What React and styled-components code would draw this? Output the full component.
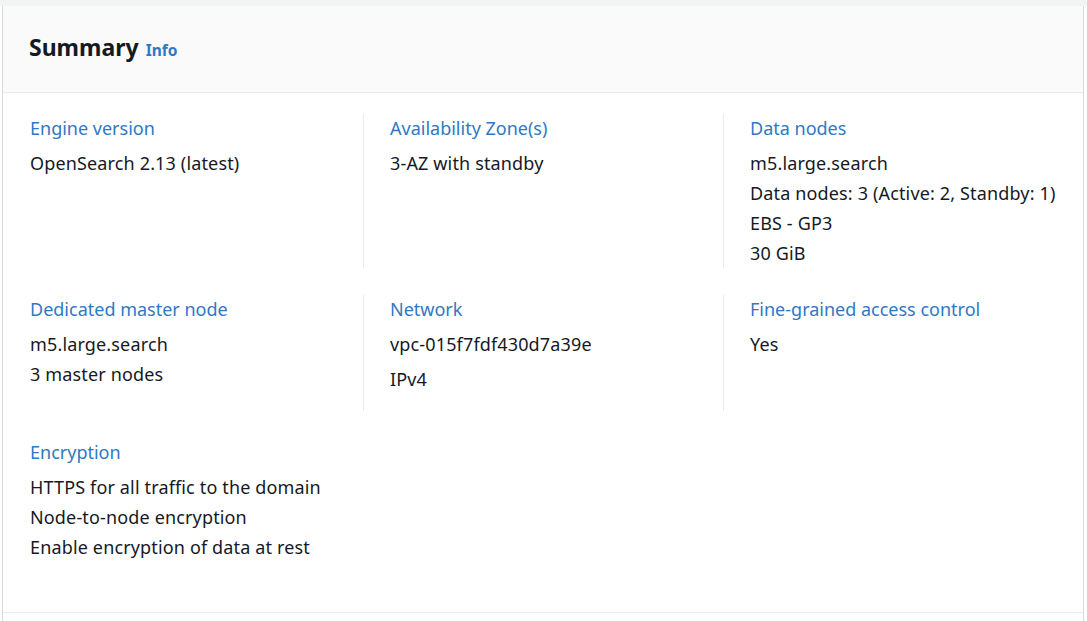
import React from "react";
import styled, { createGlobalStyle } from "styled-components";

const GlobalStyle = createGlobalStyle`
  html, body {
    margin: 0;
    padding: 0;
    background: #ffffff;
  }
  body {
    font-family: "Noto Sans", "Open Sans", Arial, sans-serif;
    color: #16191f;
  }
`;

const Page = styled.div`
  width: 1087px;
  height: 621px;
  overflow: hidden;
  background: linear-gradient(#f2f3f3 0, #f2f3f3 6px, #ffffff 6px);
  padding: 6px 3px 0 2px;
  box-sizing: border-box;
`;

const Card = styled.section`
  height: 100%;
  background: #ffffff;
  border-left: 1px solid #d5dbdb;
  border-right: 1px solid #d5dbdb;
  box-sizing: border-box;
`;

const Header = styled.header`
  height: 87px;
  box-sizing: border-box;
  display: flex;
  align-items: center;
  padding: 0 26px 4px;
  background: #fafafa;
  border-bottom: 1px solid #eaeded;
`;

const Title = styled.h2`
  margin: 0;
  font-size: 23px;
  font-weight: 700;
  color: #16191f;
  display: flex;
  align-items: baseline;
  gap: 7px;
`;

const InfoLink = styled.span`
  font-size: 15.5px;
  font-weight: 700;
  color: #2f78c4;
`;

const Body = styled.div`
  padding: 21px 0 50px;
  border-bottom: 1px solid #eaeded;
`;

const Grid = styled.div`
  display: grid;
  grid-template-columns: repeat(3, 1fr);
  row-gap: 27px;
`;

const Column = styled.div`
  padding: 0 27px ${(p) => p.$extra || 0}px 26px;
  border-left: 1px solid ${(p) => (p.$first ? "transparent" : "#eaeded")};
  overflow: hidden;
  min-width: 0;
`;

const Label = styled.div`
  font-size: 18px;
  line-height: 28px;
  color: #2f78c4;
  margin-bottom: 6px;
  white-space: nowrap;
`;

const Value = styled.div`
  font-size: 18px;
  line-height: 30px;
  letter-spacing: 0.15px;
  color: #16191f;
  white-space: nowrap;
  margin-top: ${(p) => (p.$spaced ? 5 : 0)}px;
`;

const items = [
  { label: "Engine version", values: ["OpenSearch 2.13 (latest)"] },
  { label: "Availability Zone(s)", values: ["3-AZ with standby"] },
  {
    label: "Data nodes",
    values: [
      "m5.large.search",
      "Data nodes: 3 (Active: 2, Standby: 1)",
      "EBS - GP3",
      "30 GiB",
    ],
  },
  {
    label: "Dedicated master node",
    values: ["m5.large.search", "3 master nodes"],
  },
  {
    label: "Network",
    values: ["vpc-015f7fdf430d7a39e", "IPv4"],
    spaced: true,
    extra: 17,
  },
  { label: "Fine-grained access control", values: ["Yes"] },
  {
    label: "Encryption",
    values: [
      "HTTPS for all traffic to the domain",
      "Node-to-node encryption",
      "Enable encryption of data at rest",
    ],
  },
];

export default function App() {
  return (
    <>
      <GlobalStyle />
      <Page>
        <Card>
          <Header>
            <Title>
              Summary <InfoLink>Info</InfoLink>
            </Title>
          </Header>
          <Body>
            <Grid>
              {items.map((item, i) => (
                <Column key={item.label} $first={i % 3 === 0} $extra={item.extra}>
                  <Label>{item.label}</Label>
                  {item.values.map((v, j) => (
                    <Value key={v} $spaced={item.spaced && j > 0}>
                      {v}
                    </Value>
                  ))}
                </Column>
              ))}
            </Grid>
          </Body>
        </Card>
      </Page>
    </>
  );
}
